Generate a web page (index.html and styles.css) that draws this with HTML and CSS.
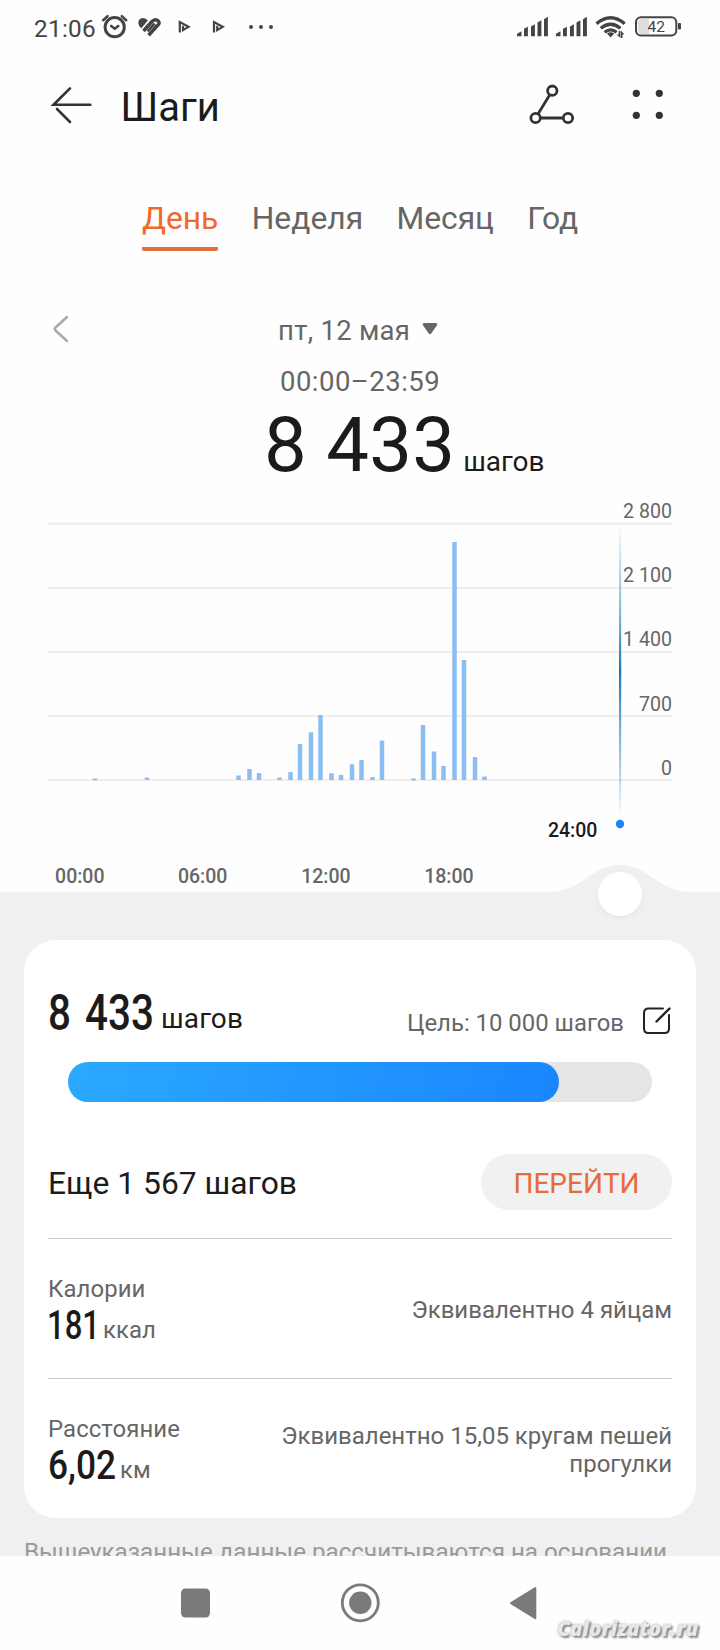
FILE: index.html
```html
<!DOCTYPE html>
<html lang="ru">
<head>
<meta charset="utf-8">
<title>Шаги</title>
<link rel="stylesheet" href="styles.css">
</head>
<body>
<div class="status">
  <span class="clock">21:06</span>
  <svg class="status-icons" width="180" height="30" viewBox="100 12 180 30">
    <g fill="none" stroke="#444" stroke-width="3" stroke-linecap="round">
      <circle cx="114.700" cy="27.200" r="9.600"/>
      <path stroke-width="2.600" d="M111.200 26l3.500 2.700 3.600-2.700M103.200 20.200l4.400-4.100M126.200 20.200l-4.400-4.100"/>
    </g>
    <g stroke="#444" stroke-width="3.500" fill="none" stroke-linejoin="round">
      <path d="M143.500 31L152 21.500Q155.500 18.400 158 20.800T157.400 25.500L148.600 35.200"/>
      <path stroke-width="2.600" d="M147.600 31.300L154.600 23.600"/>
    </g>
    <path fill="#444" d="M138.300 23q0-4.700 4.500-5 3.500 0 5 2.600L141.300 28.200q-3-2.400-3-5.200z"/>
    <g fill="none" stroke="#444" stroke-width="2.200">
      <path d="M179.800 32.500V22l8.800 4.900-5.600 3.300v-4.500"/><path d="M214 32.500V22l8.800 4.900-5.600 3.300v-4.500"/>
    </g>
    <g fill="#444"><circle cx="251" cy="27" r="2"/><circle cx="261" cy="27" r="2"/><circle cx="271" cy="27" r="2"/></g>
  </svg>
  <svg class="signal-icons" width="168" height="30" viewBox="515 12 168 30">
    <g fill="#444">
      <path id="sig" d="M517 36.300v-2.500l4.500-2.600v5.100zM524 36.300v-7.600l3.900-2v9.600zM531 36.300V26.500l3.900-2.200v12zM537.500 36.300V22.500l3.900-2.200v16zM544 36.300V19.200l3.900-2.400v19.500z"/>
      <use href="#sig" x="39"/>
      <path d="M607 33.600q3.600-2.600 7.200 0l-3.600 3.800z"/>
      <path d="M616.500 34.500h2.200v-3.500h1.700v7zM624.500 34.500h-2V38h-1.600v-7.500z"/>
    </g>
    <g fill="none" stroke="#444" stroke-width="3.300">
      <path d="M596.500 23.700q14.100-12 28.200 0M600.800 28.300q9.800-8 19.600 0M604.600 32.200q6-4.600 12 0"/>
    </g>
    <path fill="#ddd" d="M641 19h8v15h-8q-3-1-3-3.500v-8q0-2.500 3-3.500z"/>
    <rect x="636" y="17.200" width="40.300" height="18.400" rx="5" fill="none" stroke="#444" stroke-width="2"/>
    <rect x="678" y="23" width="3" height="6.500" rx="1" fill="#444"/>
    <text x="656.300" y="32" class="battery">42</text>
  </svg>
</div>

<header class="header">
  <svg width="44" height="40" viewBox="50 84 44 40" fill="none" stroke="#333" stroke-width="2.600" stroke-linecap="round">
    <path d="M90.300 104.800H53.500L70 88.300M57 109l13 13"/>
  </svg>
  <h1 class="title">Шаги</h1>
  <svg class="header-actions" width="138" height="44" viewBox="528 82 138 44">
    <g fill="none" stroke="#333" stroke-width="2.800">
      <circle cx="552.300" cy="90.700" r="4.700"/><circle cx="535.600" cy="118" r="4.700"/><circle cx="568" cy="118" r="4.700"/>
      <path d="M549.800 94.800L538 114M540.300 118h23"/>
    </g>
    <g fill="#333"><circle cx="636.300" cy="93.300" r="3.600"/><circle cx="659.300" cy="93.300" r="3.600"/><circle cx="636.300" cy="115.300" r="3.600"/><circle cx="659.300" cy="115.300" r="3.600"/></g>
  </svg>
</header>

<nav class="tabs">
  <span class="tab active">День</span><span class="tab">Неделя</span><span class="tab">Месяц</span><span class="tab">Год</span>
</nav>

<div class="date-row">
  <svg class="prev" width="18" height="30" viewBox="52 314 18 30" fill="none" stroke="#aaa" stroke-width="2.500" stroke-linecap="round" stroke-linejoin="round"><path d="M67 317L55.500 327.500q-1.500 1.500 0 3L67 341"/></svg>
  <span class="date">пт, 12 мая</span>
  <svg class="caret" width="16" height="12" viewBox="0 0 16 12"><path fill="#666" d="M2 0h12q2 .4 1.200 2L9.200 10.500q-1.200 1.500-2.400 0L.8 2Q0 .4 2 0z"/></svg>
</div>
<div class="range">00:00–23:59</div>
<div class="total"><span class="total-num">8 433</span><span class="total-unit">шагов</span></div>

<svg class="chart" width="720" height="459" viewBox="0 481 720 459">
  <defs>
    <linearGradient id="cursor" x1="0" y1="526" x2="0" y2="817" gradientUnits="userSpaceOnUse">
      <stop offset="0" stop-color="#2e7fc0" stop-opacity="0"/><stop offset=".25" stop-color="#3a9bd0" stop-opacity=".55"/>
      <stop offset=".5" stop-color="#1a74b4"/><stop offset=".75" stop-color="#3a94d8" stop-opacity=".6"/><stop offset="1" stop-color="#2e7fc0" stop-opacity="0"/>
    </linearGradient>
    <filter id="soft" x="-30%" y="-30%" width="160%" height="160%"><feDropShadow dx="0" dy="2" stdDeviation="2.500" flood-color="#000" flood-opacity=".04"/></filter>
  </defs>
  <path class="grid" d="M48 523.800h624M48 587.900h624M48 652h624M48 716h624M48 780.100h624"/>
  <g class="bars">
    <path d="M95 780.500v-2M147 780v-2.500M238.500 780v-4.500M249.500 780v-11M259 780v-7M279.500 780v-2.500M290.500 780v-8M300 780v-36M311 780v-47.700M320.500 780v-65M331.500 780v-6.800M341 780v-5M352 780v-15.800M361.500 780v-20M372.500 780v-3M382 780v-39.500M413.500 780.500v-2M423 780v-55M434 780v-28.500M443.500 780v-14M454.500 780v-238M464 780v-120M475 780v-23M484.500 780v-3.500"/>
  </g>
  <rect x="619" y="526" width="2.200" height="291" fill="url(#cursor)"/>
  <circle cx="620" cy="824" r="4.200" fill="#1c86f8"/>
  <g class="y-labels">
    <text x="672" y="518">2 800</text><text x="672" y="582">2 100</text><text x="672" y="646">1 400</text><text x="672" y="711">700</text><text x="672" y="775">0</text>
  </g>
  <g class="x-labels">
    <text x="79.800" y="883">00:00</text><text x="202.700" y="883">06:00</text><text x="325.900" y="883">12:00</text><text x="448.900" y="883">18:00</text>
    <text x="572.700" y="837" class="current">24:00</text>
  </g>
  <path fill="#f0f0f0" d="M0 892H548C583 892 590 865 620 865S657 892 692 892H720V940H0z"/>
  <circle cx="620" cy="894" r="22" fill="#fff" filter="url(#soft)"/>
</svg>

<main class="panel">
  <section class="card">
    <div class="goal-row">
      <svg class="num" width="106" height="46" viewBox="0 0 106 46"><text x="0" y="41.800" textLength="106" lengthAdjust="spacingAndGlyphs" class="num-lg">8 433</text></svg>
      <span class="goal-unit">шагов</span>
      <span class="goal">Цель: 10 000 шагов</span>
      <svg class="edit" width="30" height="30" viewBox="0 0 30 30" fill="none" stroke="#222" stroke-width="2" stroke-linecap="round"><path d="M21 2.500H6.500Q2 2.500 2 7v15.500q0 4.500 4.500 4.500h16q4.500 0 4.500-4.500V9"/><path stroke-width="2.400" d="M14.500 15.500L27.500 2.500"/></svg>
    </div>
    <div class="progress"><div class="progress-fill" style="width:84.1%"></div></div>
    <div class="more-row"><span class="more">Еще 1 567 шагов</span><button class="go">ПЕРЕЙТИ</button></div>
    <div class="metric">
      <div class="metric-left">
        <div class="label">Калории</div>
        <div class="value"><svg class="num" width="51" height="40" viewBox="0 0 51 40"><text x="-1" y="35" textLength="53" lengthAdjust="spacingAndGlyphs" class="num-md">181</text></svg><span class="unit">ккал</span></div>
      </div>
      <div class="equiv">Эквивалентно 4 яйцам</div>
    </div>
    <div class="metric">
      <div class="metric-left">
        <div class="label">Расстояние</div>
        <div class="value"><svg class="num" width="68" height="40" viewBox="0 0 68 40"><text x="0" y="35" textLength="68" lengthAdjust="spacingAndGlyphs" class="num-md">6,02</text></svg><span class="unit">км</span></div>
      </div>
      <div class="equiv">Эквивалентно 15,05 кругам пешей<br>прогулки</div>
    </div>
  </section>
  <div class="note">Вышеуказанные данные рассчитываются на основании</div>
</main>

<footer class="navbar">
  <svg width="360" height="42" viewBox="178 1582 360 42" fill="#7a7a7a">
    <rect x="181" y="1588.500" width="29" height="29" rx="4.500"/>
    <circle cx="360.300" cy="1602.800" r="18" fill="none" stroke="#7a7a7a" stroke-width="2.800"/><circle cx="360.300" cy="1602.800" r="11.200"/>
    <path stroke="#7a7a7a" stroke-width="2" stroke-linejoin="round" d="M535.300 1588v30.200L511 1603.200z"/>
  </svg>
  <span class="watermark">Calorizator.ru</span>
</footer>
</body>
</html>
```

FILE: styles.css
```css
* { box-sizing: border-box; }
body {
  margin: 0;
  width: 720px;
  height: 1650px;
  overflow: hidden;
  background: #fefefe;
  color: #1b1b1b;
  font-family: Roboto, "Noto Sans", sans-serif;
}
svg { display: block; flex: none; }
text { font-family: Roboto, "Noto Sans", sans-serif; }

.status { display: flex; height: 54px; padding: 0 37px 0 34px; }
.clock { width: 66px; font-size: 24.300px; line-height: 57px; letter-spacing: .3px; color: #444; }
.status-icons, .signal-icons { margin-top: 12px; }
.signal-icons { margin-left: auto; }
.battery { font-size: 15.500px; text-anchor: middle; fill: #444; }

.header { display: flex; align-items: center; height: 100px; padding: 0 54px 0 50px; }
.title { margin: 7px 0 0 26.500px; font-size: 40px; line-height: 60px; font-weight: 400; }
.header-actions { margin-left: auto; }

.tabs { display: flex; gap: 33.300px; height: 128px; padding: 35px 0 0 142px; }
.tab { height: 62px; font-size: 31.800px; line-height: 59px; color: #666; }
.active { color: #f0682a; border-bottom: 4px solid #dc7038; border-radius: 2px; }

.date-row { display: flex; align-items: center; height: 48px; margin-top: 25px; padding-left: 52px; font-size: 27.500px; color: #666; }
.prev { margin-bottom: 4px; }
.date { margin-left: 208px; line-height: 48px; letter-spacing: .27px; }
.caret { margin: 0 0 4px 12px; }
.range { padding-left: 280px; font-size: 27.500px; line-height: 54px; letter-spacing: .47px; color: #666; }
.total { display: flex; align-items: baseline; height: 72px; padding-left: 264px; line-height: 72px; }
.total-num { font-size: 76px; letter-spacing: .3px; }
.total-unit { margin-left: 8px; font-size: 28px; }

.grid { stroke: #eee; stroke-width: 2; fill: none; }
.bars path { stroke: #8bbff2; stroke-width: 4.500; fill: none; }
.y-labels { font-size: 19.600px; fill: #666; text-anchor: end; }
.x-labels { font-size: 19.500px; font-weight: 500; fill: #666; text-anchor: middle; }
.x-labels .current { fill: #1b1b1b; }

.panel { height: 616px; padding: 0 24px; background: #f0f0f0; overflow: hidden; }
.card { height: 578px; padding: 0 24px; background: #fff; border-radius: 32px; }
.num { overflow: visible; }
.num-lg { font-size: 50px; font-weight: 500; word-spacing: 5px; fill: #1b1b1b; }
.num-md { font-size: 41px; font-weight: 500; fill: #1b1b1b; }
.goal-row { display: flex; height: 122px; padding-top: 48px; }
.goal-unit { margin-left: 7px; font-size: 28px; line-height: 61px; letter-spacing: .15px; }
.goal { margin-left: auto; font-size: 23.900px; line-height: 70px; color: #666; }
.edit { margin: 18px 0 0 18px; }
.progress { height: 40px; margin: 0 20px; border-radius: 20px; background: #e5e5e5; }
.progress-fill { height: 40px; border-radius: 20px; background: linear-gradient(100deg, #2aa9ff, #1a86ff); }
.more-row { display: flex; align-items: center; justify-content: space-between; height: 136px; padding-top: 24px; }
.more { padding-top: 1px; font-size: 31.800px; }
.go { width: 191px; height: 56px; padding: 2px 0 0; border: 0; border-radius: 28px; background: #f1f1f1; color: #e56c39; font: 28px Roboto, sans-serif; }
.metric { display: flex; align-items: center; justify-content: space-between; height: 140px; border-top: 1px solid #c8c8c8; }
.metric-left { padding-top: 1px; }
.label { font-size: 23.900px; line-height: 30px; letter-spacing: .1px; color: #666; }
.value { display: flex; height: 40px; }
.unit { margin-left: 4px; font-size: 23.900px; line-height: 52px; letter-spacing: .1px; color: #666; }
.equiv { padding-top: 2px; font-size: 24px; line-height: 28px; text-align: right; color: #666; }
.note { font-size: 24.200px; line-height: 68px; white-space: nowrap; color: #999; }

.navbar { position: relative; height: 94px; padding: 26px 0 0 178px; background: #fefefe; }
.watermark {
  position: absolute;
  left: 557px;
  top: 58px;
  font: italic 800 20.500px/28px "Open Sans", sans-serif;
  color: #e8e8e8;
  text-shadow: 2px 2px 2px #888, 0 0 2px #aaa;
}
```
